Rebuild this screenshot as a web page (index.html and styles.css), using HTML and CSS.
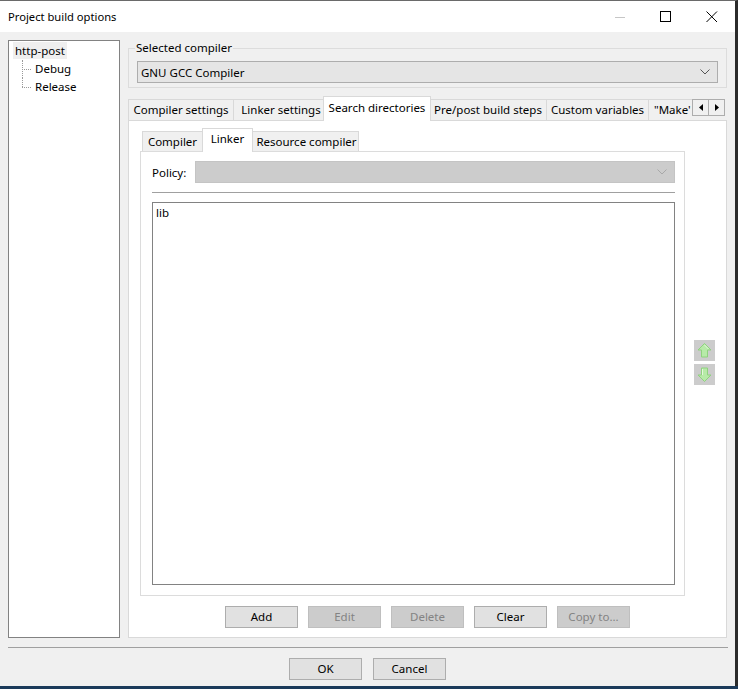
FILE: index.html
```html
<!DOCTYPE html>
<html>
<head>
<meta charset="utf-8">
<link rel="stylesheet" href="styles.css">
</head>
<body>
<div class="window">
  <div class="titlebar">
    <span class="title">Project build options</span>
    <div class="ctl"><svg width="12" height="12" viewBox="0 0 12 12"><line x1="1" y1="6.5" x2="11" y2="6.5" stroke="#c6c6c6" stroke-width="1"/></svg></div>
    <div class="ctl"><svg width="12" height="12" viewBox="0 0 12 12"><rect x="0.5" y="0.5" width="10" height="10" fill="none" stroke="#000" stroke-width="1"/></svg></div>
    <div class="ctl"><svg width="12" height="12" viewBox="0 0 12 12"><path d="M0.5 0.5 L11 11 M11 0.5 L0.5 11" stroke="#000" stroke-width="1" fill="none"/></svg></div>
  </div>
  <div class="body">
    <div class="main">
      <div class="tree">
        <div class="node root"><span class="sel">http-post</span></div>
        <div class="kids">
          <div class="node kid">Debug</div>
          <div class="node kid last">Release</div>
        </div>
      </div>
      <div class="right">
        <fieldset class="group">
          <legend>Selected compiler</legend>
          <div class="combo">
            <span class="combo-text">GNU GCC Compiler</span>
            <svg class="chev" width="10" height="6" viewBox="0 0 10 6"><path d="M0.5 0.5 L5 5 L9.5 0.5" stroke="#555" stroke-width="1" fill="none"/></svg>
          </div>
        </fieldset>
        <div class="notebook">
          <div class="tabs">
            <div class="tab t1">Compiler settings</div>
            <div class="tab t2">Linker settings</div>
            <div class="tab t3 active">Search directories</div>
            <div class="tab t4">Pre/post build steps</div>
            <div class="tab t5">Custom variables</div>
            <div class="tab t6">"Make'</div>
            <div class="scroll">
              <div class="sbtn"><svg width="4" height="7" viewBox="0 0 4 7"><path d="M4 0 L0 3.5 L4 7 Z" fill="#000"/></svg></div>
              <div class="sbtn"><svg width="4" height="7" viewBox="0 0 4 7"><path d="M0 0 L4 3.5 L0 7 Z" fill="#000"/></svg></div>
            </div>
          </div>
          <div class="page">
            <div class="subarea">
              <div class="subnb">
                <div class="subtabs">
                  <div class="stab s1">Compiler</div>
                  <div class="stab s2 active">Linker</div>
                  <div class="stab s3">Resource compiler</div>
                </div>
                <div class="subpage">
                  <div class="policy">
                    <span class="plabel">Policy:</span>
                    <div class="combo dis">
                      <span class="combo-text"></span>
                      <svg class="chev" width="10" height="6" viewBox="0 0 10 6"><path d="M0.5 0.5 L5 5 L9.5 0.5" stroke="#a8a8a8" stroke-width="1" fill="none"/></svg>
                    </div>
                  </div>
                  <div class="hsep"></div>
                  <div class="listbox"><div class="item">lib</div></div>
                </div>
              </div>
              <div class="side">
                <div class="abtn"><svg width="21" height="21" viewBox="0 0 21 21"><path d="M10.5 3.5 L17 10 L13.5 10 L13.5 17 L7.5 17 L7.5 10 L4 10 Z" fill="#b7eaa8" stroke="#8fd27e" stroke-width="1" stroke-linejoin="round"/><path d="M10.5 5 L14.5 9" stroke="#e4f8dc" stroke-width="1"/></svg></div>
                <div class="abtn"><svg width="21" height="21" viewBox="0 0 21 21"><path d="M10.5 17.5 L17 11 L13.5 11 L13.5 4 L7.5 4 L7.5 11 L4 11 Z" fill="#b7eaa8" stroke="#8fd27e" stroke-width="1" stroke-linejoin="round"/><path d="M8.5 5 L8.5 11" stroke="#e4f8dc" stroke-width="1"/></svg></div>
              </div>
            </div>
            <div class="btnrow">
              <div class="btn">Add</div>
              <div class="btn dis">Edit</div>
              <div class="btn dis">Delete</div>
              <div class="btn">Clear</div>
              <div class="btn dis">Copy to...</div>
            </div>
          </div>
        </div>
      </div>
    </div>
    <div class="sep"></div>
    <div class="dlgbtns">
      <div class="btn">OK</div>
      <div class="btn">Cancel</div>
    </div>
  </div>
</div>
</body>
</html>
```
FILE: styles.css
```css
* { box-sizing: border-box; }
html, body { margin: 0; padding: 0; }
body {
  background: #1b3a5a;
  width: 738px;
  height: 689px;
  overflow: hidden;
  font-family: "Noto Sans", "Segoe UI", sans-serif;
  font-size: 11.5px;
  color: #000;
}
.window {
  width: 738px;
  height: 686px;
  background: #f0f0f0;
  border-top: 1px solid #6a6a6a;
  border-right: 3px solid #2b2b2b;
  display: flex;
  flex-direction: column;
}
.titlebar {
  height: 31px;
  background: #fff;
  display: flex;
  align-items: center;
  padding-left: 8px;
  font-size: 11.2px;
}
.title { flex: 1; }
.ctl {
  width: 46px;
  height: 31px;
  display: flex;
  align-items: center;
  justify-content: center;
}
.body {
  flex: 1;
  display: flex;
  flex-direction: column;
  padding: 8px 0 0 0;
}
.main {
  display: grid;
  grid-template-columns: 112px 599px;
  column-gap: 8px;
  padding-left: 8px;
  height: 598px;
}
.tree {
  background: #fff;
  border: 1px solid #828282;
  padding: 1px 0 0 4px;
}
.node { height: 18px; line-height: 18px; white-space: nowrap; }
.root .sel { background: #efefef; padding: 1px 2px; }
.kids { margin-left: 9px; }
.kid { position: relative; padding-left: 13px; }
.kid::before {
  content: "";
  position: absolute;
  left: 0; top: 9px;
  width: 9px;
  border-top: 1px dotted #9a9a9a;
}
.kid::after {
  content: "";
  position: absolute;
  left: 0; top: 0;
  height: 18px;
  border-left: 1px dotted #9a9a9a;
}
.kid.last::after { height: 9px; }

.right { display: flex; flex-direction: column; min-width: 0; }
.group {
  margin: 1px 0 0 0;
  padding: 6px 8px 4px 8px;
  border: 1px solid #dcdcdc;
  min-width: 0;
}
.group legend {
  padding: 0 1px;
  margin-left: -2px;
  line-height: 14px;
  height: 14px;
}
.combo {
  height: 22px;
  border: 1px solid #adadad;
  background: #e5e5e5;
  display: flex;
  align-items: center;
  padding: 0 7px 0 3px;
}
.combo-text { flex: 1; }
.combo.dis { background: #cccccc; border-color: #c4c4c4; flex: 1; }

.notebook { margin-top: 8px; flex: 1; display: flex; flex-direction: column; }
.tabs { height: 24px; display: flex; align-items: flex-end; position: relative; z-index: 1; }
.tab {
  height: 21px;
  line-height: 19px;
  border: 1px solid #d9d9d9;
  border-bottom: none;
  background: #f0f0f0;
  text-align: center;
  white-space: nowrap;
  overflow: hidden;
  margin-right: -1px;
}
.tab.active {
  height: 25px;
  line-height: 21px;
  background: #fff;
  margin-bottom: -1px;
  margin-left: -2px;
  margin-right: -2px;
  position: relative;
  z-index: 2;
}
.t1 { width: 106px; }
.t2 { width: 93px; padding-left: 3px; }
.t3 { width: 108px; }
.t4 { width: 118px; }
.t5 { width: 103px; }
.t6 { width: 44px; text-align: left; padding-left: 5px; border-right: none; }
.scroll { display: flex; margin: 0 0 4px 1px; }
.sbtn {
  width: 17px; height: 17px;
  border: 1px solid #adadad;
  background: #f0f0f0;
  display: flex; align-items: center; justify-content: center;
  margin-right: -1px;
}
.page {
  flex: 1;
  background: #fff;
  border: 1px solid #d9d9d9;
  display: flex;
  flex-direction: column;
  padding: 8px 11px 9px 11px;
}
.subarea { flex: 1; display: flex; }
.subnb { width: 546px; display: flex; flex-direction: column; }
.subtabs { height: 22px; display: flex; align-items: flex-end; padding-left: 2px; position: relative; z-index: 1; }
.stab {
  height: 20px;
  line-height: 19px;
  border: 1px solid #d9d9d9;
  border-bottom: none;
  background: #f0f0f0;
  text-align: center;
  margin-right: -1px;
}
.stab.active {
  height: 24px;
  line-height: 19px;
  background: #fff;
  margin-bottom: -1px;
  position: relative;
  z-index: 2;
}
.s1 { width: 61px; }
.s2 { width: 51px; }
.s3 { width: 107px; padding-left: 2px; }
.subpage {
  flex: 1;
  border: 1px solid #dcdcdc;
  background: #fff;
  padding: 9px 9px 10px 11px;
  display: flex;
  flex-direction: column;
}
.policy { height: 22px; display: flex; align-items: center; }
.plabel { width: 43px; }
.hsep { height: 1px; background: #a0a0a0; margin-top: 9px; }
.listbox {
  margin-top: 9px;
  flex: 1;
  border: 1px solid #828282;
  padding: 1px 3px;
}
.item { line-height: 17px; }
.side {
  width: 21px;
  margin-left: 9px;
  display: flex;
  flex-direction: column;
  justify-content: center;
  gap: 3px;
}
.abtn { width: 21px; height: 21px; background: #cccccc; }
.abtn svg { display: block; }

.btnrow {
  margin-top: 10px;
  display: flex;
  justify-content: center;
  gap: 10px;
}
.btn {
  width: 73px;
  height: 22px;
  border: 1px solid #adadad;
  background: #e1e1e1;
  text-align: center;
  line-height: 20px;
}
.btn.dis { background: #cccccc; border-color: #bfbfbf; color: #838383; }
.sep { margin: 9px 7px 0 8px; height: 1px; background: #a0a0a0; }
.dlgbtns { margin-top: 10px; display: flex; justify-content: center; gap: 11px; }
```
